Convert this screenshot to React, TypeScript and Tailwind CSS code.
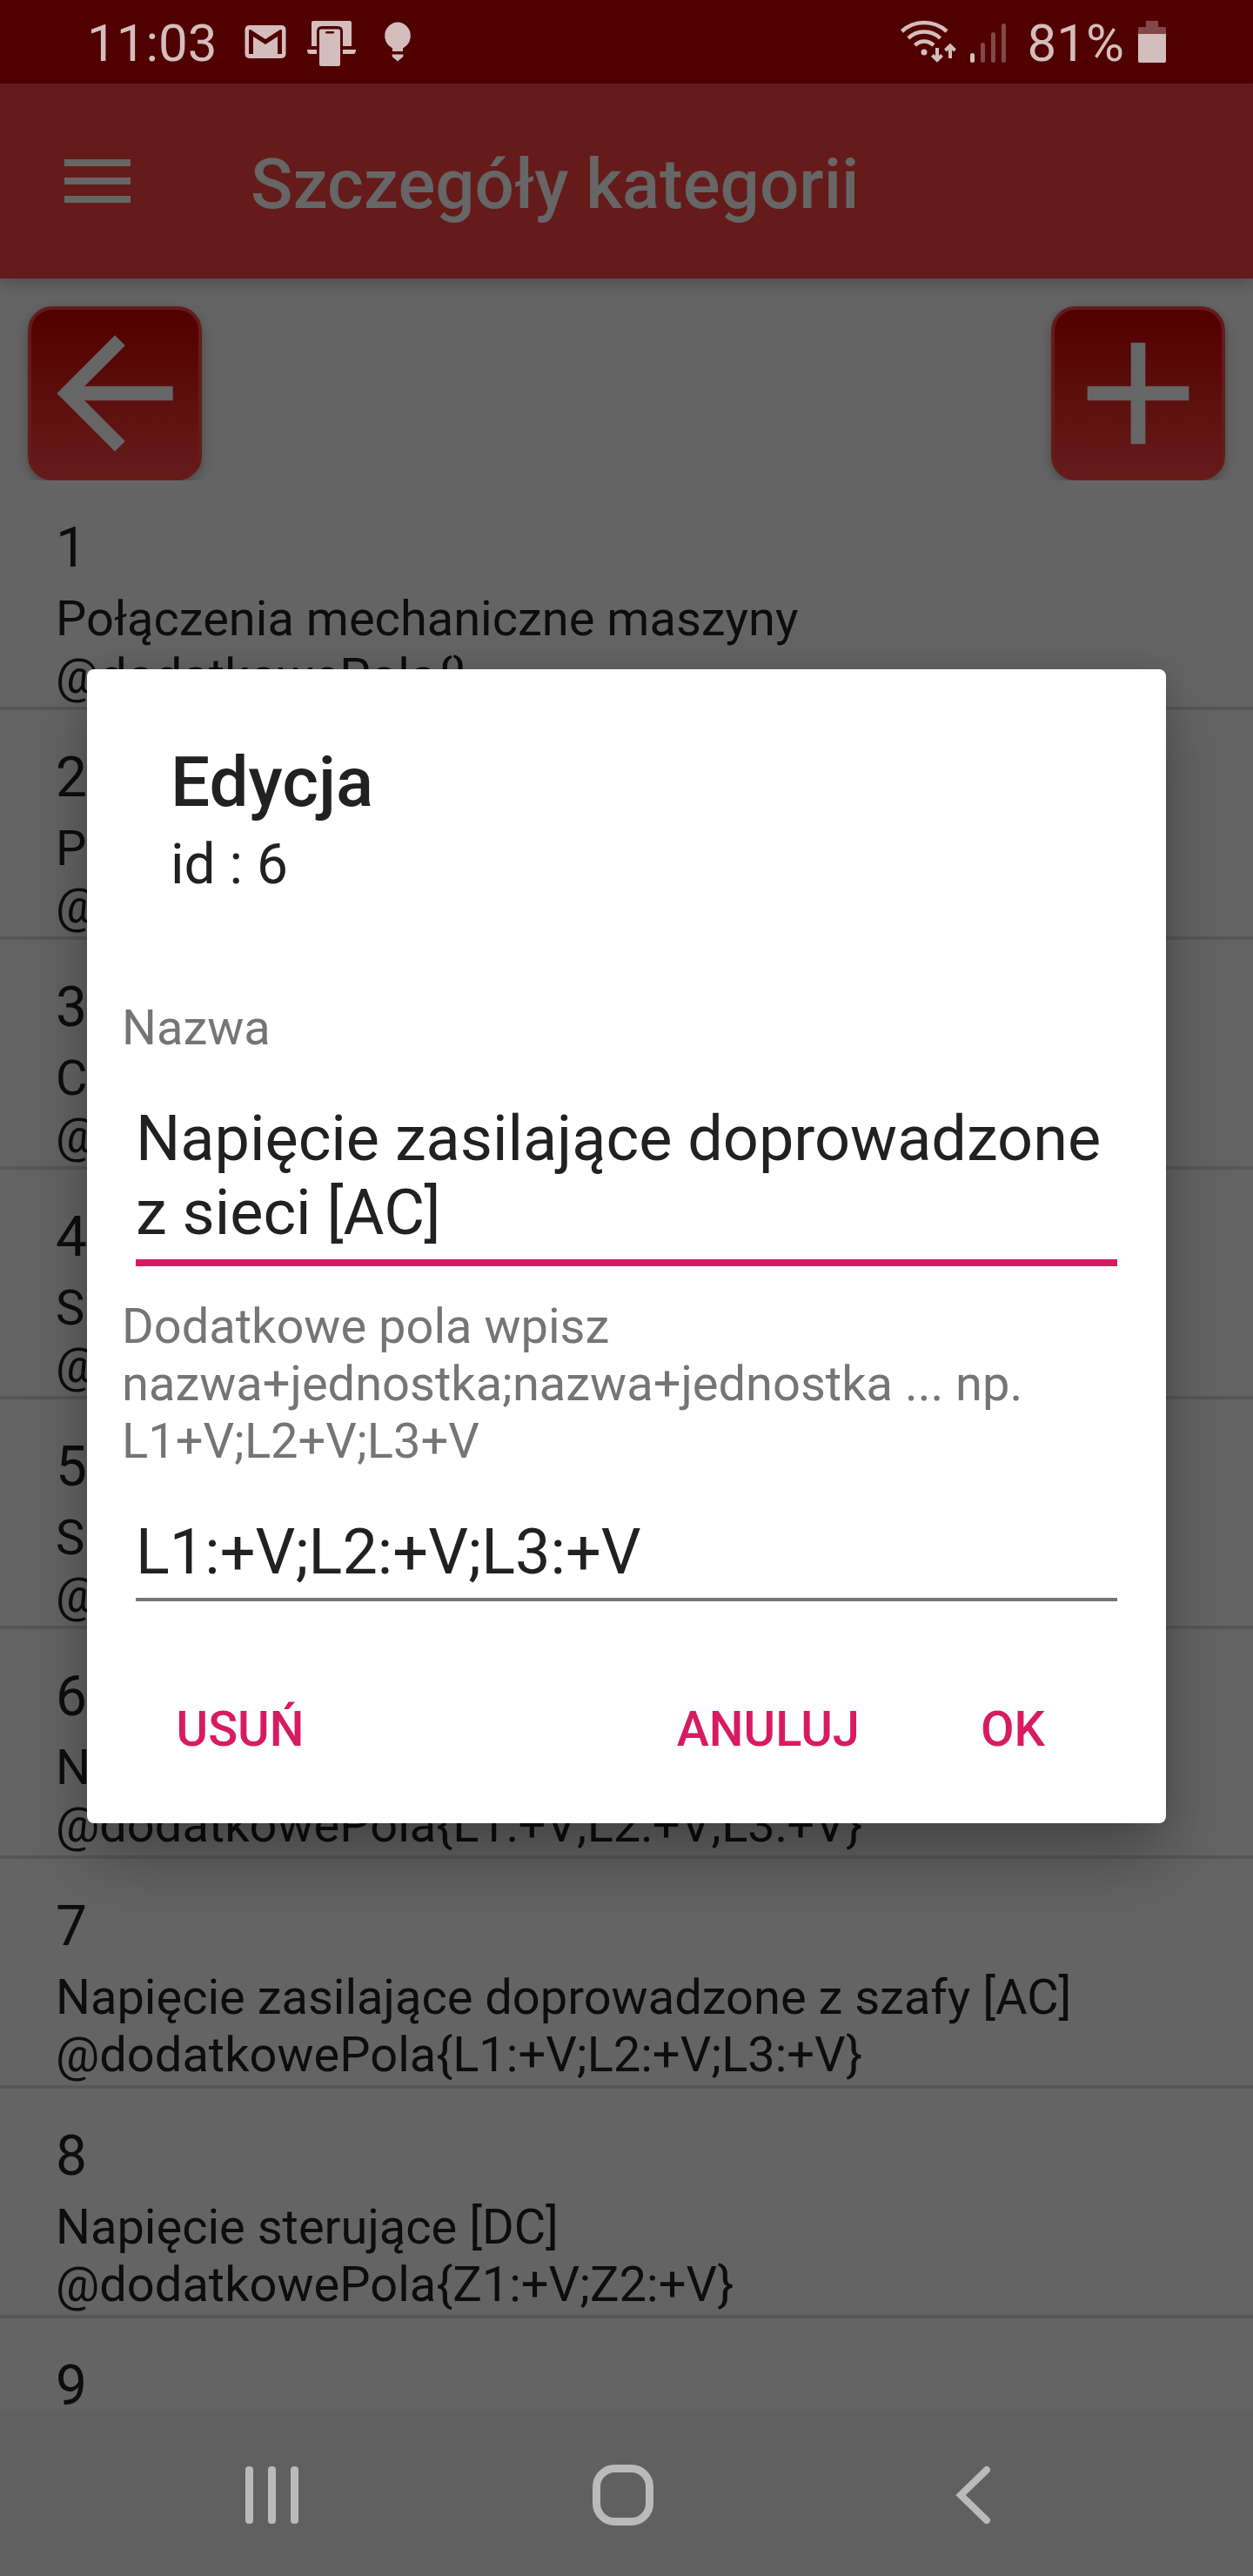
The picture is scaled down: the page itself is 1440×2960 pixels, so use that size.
import React, { useState } from "react";

type Category = { id: number; name?: string; fields?: string };

const categories: Category[] = [
  { id: 1, name: "Połączenia mechaniczne maszyny", fields: "@dodatkowePola{}" },
  { id: 2, name: "P", fields: "@dodatkowePola{}" },
  { id: 3, name: "C", fields: "@dodatkowePola{}" },
  { id: 4, name: "S", fields: "@dodatkowePola{}" },
  { id: 5, name: "S", fields: "@dodatkowePola{}" },
  {
    id: 6,
    name: "Napięcie zasilające doprowadzone z sieci [AC]",
    fields: "@dodatkowePola{L1:+V;L2:+V;L3:+V}",
  },
  {
    id: 7,
    name: "Napięcie zasilające doprowadzone z szafy [AC]",
    fields: "@dodatkowePola{L1:+V;L2:+V;L3:+V}",
  },
  { id: 8, name: "Napięcie sterujące [DC]", fields: "@dodatkowePola{Z1:+V;Z2:+V}" },
  { id: 9 },
];

function StatusBar() {
  return (
    <div className="flex h-24 shrink-0 items-center justify-between bg-[#510000] px-25 text-[60px] leading-[70px] text-[#d4bdbd]">
      <div className="flex items-center gap-6">
        <span className="pt-1 pr-2">11:03</span>
        <svg className="h-14 w-12" viewBox="0 0 48 56" fill="none" aria-hidden="true">
          <rect x="0.5" y="9" width="47" height="38" rx="5" fill="#d4bdbd" />
          <path
            d="M5 42V14.500L7 14L24 25L41 14L43 14.500V42H38V22L24 31L10 22V42Z"
            fill="#510000"
          />
        </svg>
        <svg className="h-14 w-14" viewBox="0 0 56 56" fill="#d4bdbd" aria-hidden="true">
          <path d="M7 4H49Q51 4 51 6V33H41V16Q41 10 35 10H17Q11 10 11 16V33H5V6Q5 4 7 4Z" />
          <path d="M0 37H11V42H3Q0 42 0 37Z" />
          <path d="M41 37H56Q56 42 53 42H41Z" />
          <rect x="14" y="13.500" width="24" height="42.500" rx="2" />
          <rect x="21" y="16" width="10" height="2.500" rx="1.200" fill="#510000" />
        </svg>
        <svg className="h-14 w-12" viewBox="0 0 48 56" fill="#d4bdbd" aria-hidden="true">
          <path d="M24 5.500A15.800 15.800 0 0 0 18 35.500V39H30V35.500A15.800 15.800 0 0 0 24 5.500Z" />
          <path d="M17.500 42.500H30.500Q30.500 46 28 47L24 50.500L20 47Q17.500 46 17.500 42.500Z" />
        </svg>
      </div>
      <div className="flex items-center gap-4">
        <svg
          className="h-14 w-16"
          viewBox="0 0 64 56"
          fill="none"
          stroke="#d4bdbd"
          strokeWidth="4.500"
          aria-hidden="true"
        >
          <path d="M1.500 16Q12 6 27 6T53 16" />
          <path d="M9 24Q16 16.500 27 16.500T45.500 24" />
          <path d="M16.500 32Q21 27.500 27 27.500T38 32" />
          <circle cx="27" cy="40" r="3.500" fill="#d4bdbd" stroke="none" />
          <path d="M42 35V49M36.500 43.500L42 49L47.500 43.500" strokeWidth="4" />
          <path d="M57 47V33M51.500 38L57 32.500L62.500 38" strokeWidth="4" />
        </svg>
        <svg className="h-14 w-[42px]" viewBox="0 0 42 56" fill="#834747" aria-hidden="true">
          <rect x="0" y="41" width="5" height="11" rx="2.500" fill="#d4bdbd" />
          <rect x="12" y="29" width="5" height="23" rx="2.500" />
          <rect x="24" y="17" width="5" height="35" rx="2.500" />
          <rect x="36" y="7" width="5" height="45" rx="2.500" />
        </svg>
        <span className="pt-1 pl-2">81%</span>
        <svg className="h-14 w-8" viewBox="0 0 32 56" fill="#834747" aria-hidden="true">
          <path d="M9 4H23V11H30Q32 11 32 13V19H0V13Q0 11 2 11H9Z" />
          <path d="M0 19H32V50Q32 52 30 52H2Q0 52 0 50Z" fill="#d4bdbd" />
        </svg>
      </div>
    </div>
  );
}

function ToolButton({ label, path }: { label: string; path: string }) {
  return (
    <button
      type="button"
      aria-label={label}
      className="size-50 rounded-[28px] border-4 border-[#651b1a] bg-linear-to-b from-[#510000] to-[#651b1a] shadow-[0_4px_12px_rgba(0,0,0,0.3)]"
    >
      <svg className="-m-1 size-50" viewBox="0 0 24 24" fill="#666666" aria-hidden="true">
        <path d={path} />
      </svg>
    </button>
  );
}

function EditDialog() {
  const [name, setName] = useState("Napięcie zasilające doprowadzone z sieci [AC]");
  const [fields, setFields] = useState("L1:+V;L2:+V;L3:+V");
  const action = "h-48 min-w-64 px-12 text-[56px] leading-[66px] font-medium text-[#d81b60]";

  return (
    <div className="absolute inset-0 flex items-center px-25 pt-24 pb-48">
      <form
        role="dialog"
        aria-labelledby="dialog-title"
        className="w-full rounded-lg bg-white px-10 pt-[83px] pb-3 text-[#212121] shadow-[0_44px_80px_rgba(0,0,0,0.28),0_0_24px_rgba(0,0,0,0.12)]"
      >
        <div className="px-14">
          <h2 id="dialog-title" className="text-[80px] leading-[94px] font-medium">
            Edycja
          </h2>
          <p className="mt-2.5 text-[64px] leading-[76px]">id : 6</p>
        </div>

        <label
          htmlFor="category-name"
          className="mt-29 block text-[56px] leading-[66px] text-[#757575]"
        >
          Nazwa
        </label>
        <div className="mt-13 px-4">
          <textarea
            id="category-name"
            rows={2}
            value={name}
            onChange={(e) => setName(e.target.value)}
            className="block w-full resize-none overflow-hidden border-b-8 border-[#d81b60] pb-[11px] text-[72px] leading-[85px] outline-none"
          />
        </div>

        <label
          htmlFor="category-fields"
          className="mt-9 block text-[56px] leading-[66px] text-[#757575]"
        >
          Dodatkowe pola wpisz nazwa+jednostka;nazwa+jednostka ... np. L1+V;L2+V;L3+V
        </label>
        <div className="mt-13 px-4">
          <input
            id="category-fields"
            type="text"
            value={fields}
            onChange={(e) => setFields(e.target.value)}
            className="block h-[99px] w-full border-b-4 border-[#757575] pb-2.5 text-[72px] leading-[85px] outline-none"
          />
        </div>

        <div className="mt-[51px] flex px-2">
          <button type="button" className={action}>
            USUŃ
          </button>
          <div className="flex-1" />
          <button type="button" className={action}>
            ANULUJ
          </button>
          <button type="button" className={action}>
            OK
          </button>
        </div>
      </form>
    </div>
  );
}

function NavigationBar() {
  return (
    <nav className="z-10 flex h-48 shrink-0 items-center bg-[#606060] pt-1.5 pr-30 pl-28">
      <button type="button" aria-label="Ostatnie" className="flex flex-1 justify-center">
        <svg className="size-18" viewBox="0 0 72 72" fill="#bababa" aria-hidden="true">
          <rect x="5" y="3" width="9" height="66" rx="4" />
          <rect x="31" y="3" width="9" height="66" rx="4" />
          <rect x="57" y="3" width="9" height="66" rx="4" />
        </svg>
      </button>
      <button type="button" aria-label="Ekran główny" className="flex flex-1 justify-center">
        <svg
          className="size-18"
          viewBox="0 0 72 72"
          fill="none"
          stroke="#bababa"
          strokeWidth="9"
          aria-hidden="true"
        >
          <rect x="5.500" y="5.500" width="61" height="61" rx="21" />
        </svg>
      </button>
      <button type="button" aria-label="Wstecz" className="flex flex-1 justify-center">
        <svg
          className="size-18"
          viewBox="0 0 72 72"
          fill="none"
          stroke="#bababa"
          strokeWidth="8"
          strokeLinecap="round"
          aria-hidden="true"
        >
          <path d="M51 7L21 36L51 65" />
        </svg>
      </button>
    </nav>
  );
}

export default function App() {
  return (
    <div className="relative flex h-screen flex-col overflow-hidden bg-[#646464] font-[Roboto,sans-serif] text-[#0d0d0d]">
      <StatusBar />
      <header className="flex h-56 shrink-0 items-center bg-[#651b1a] shadow-[0_4px_16px_rgba(0,0,0,0.25)]">
        <button type="button" aria-label="Menu" className="ml-16 flex w-56 shrink-0 pl-2.5">
          <svg className="h-[50px] w-[76px]" viewBox="0 0 76 50" fill="#666666" aria-hidden="true">
            <rect width="76" height="8" />
            <rect y="21" width="76" height="8" />
            <rect y="42" width="76" height="8" />
          </svg>
        </button>
        <h1 className="pt-2 text-[80px] leading-[94px] font-medium text-[#666666]">
          Szczegóły kategorii
        </h1>
      </header>
      <main className="flex min-h-0 flex-1 flex-col overflow-hidden">
        <div className="flex shrink-0 justify-between overflow-hidden px-8 pt-8">
          <ToolButton
            label="Wróć"
            path="M20 11H7.830l5.590-5.590L12 4l-8 8 8 8 1.410-1.410L7.830 13H20v-2z"
          />
          <ToolButton label="Dodaj" path="M19 13h-6v6h-2v-6H5v-2h6V5h2v6h6v2z" />
        </div>
        <ul>
          {categories.map((c) => (
            <li key={c.id} className="border-b-4 border-[#575757] px-16 pt-10 pb-0.5">
              <div className="text-[64px] leading-[76px]">{c.id}</div>
              <div className="mt-2.5 min-h-33 text-[56px] leading-[66px]">
                <p>{c.name}</p>
                <p>{c.fields}</p>
              </div>
            </li>
          ))}
        </ul>
      </main>
      <NavigationBar />
      <EditDialog />
    </div>
  );
}
